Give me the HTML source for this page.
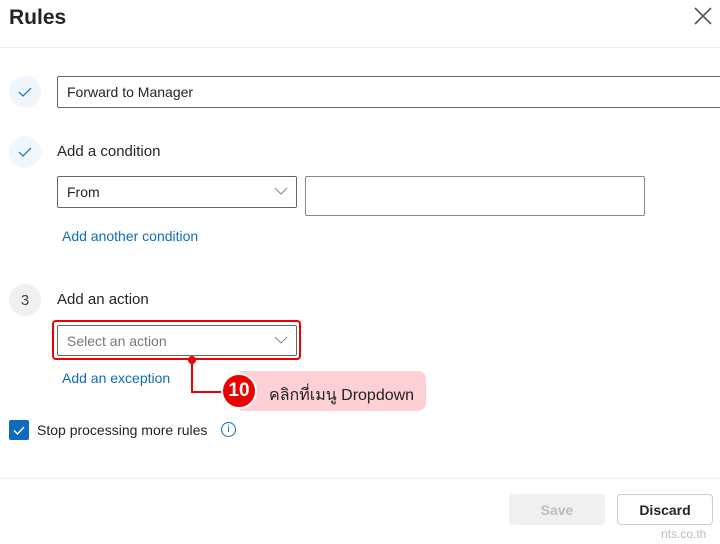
<!DOCTYPE html>
<html><head><style>
*{margin:0;padding:0;box-sizing:border-box}
body{width:720px;height:544px;background:#fff;font-family:"Liberation Sans","Noto Sans CJK SC",sans-serif;color:#242424;position:relative;overflow:hidden}
.a{position:absolute}
.circ{width:32px;height:32px;border-radius:50%;background:#eff6fc;display:flex;align-items:center;justify-content:center}
.box{border:1px solid #666;border-radius:2px;font-size:14px;padding-left:9px;display:flex;align-items:center}
.link{color:#0f6cbd;font-size:14px}
</style></head><body>
<div class="a" style="left:9px;top:6px;font-size:21px;font-weight:bold;color:#242424">Rules</div>
<svg class="a" style="left:694px;top:7px" width="18" height="18"><path d="M1 1L17 17M17 1L1 17" stroke="#555" stroke-width="1.6"/></svg>
<div class="a" style="left:0;top:47px;width:720px;height:1px;background:#eee"></div>

<div class="a circ" style="left:9px;top:76px"><svg width="14" height="10"><path d="M1 5L5 9L13 1" stroke="#0f6cbd" fill="none" stroke-width="1.2"/></svg></div>
<div class="a box" style="left:57px;top:76px;width:670px;height:32px">Forward to Manager</div>

<div class="a circ" style="left:9px;top:136px"><svg width="14" height="10"><path d="M1 5L5 9L13 1" stroke="#0f6cbd" fill="none" stroke-width="1.2"/></svg></div>
<div class="a" style="left:57px;top:143px;font-size:15px">Add a condition</div>
<div class="a box" style="left:57px;top:176px;width:240px;height:32px">From</div>
<svg class="a" style="left:274px;top:187px" width="14" height="8"><path d="M1 1L7 7L13 1" stroke="#888" fill="none"/></svg>
<div class="a" style="left:305px;top:176px;width:340px;height:40px;border:1px solid #888;border-radius:2px"></div>
<div class="a link" style="left:62px;top:228px">Add another condition</div>

<div class="a circ" style="left:9px;top:284px;background:#f0f0f0;font-size:15px;color:#444">3</div>
<div class="a" style="left:57px;top:291px;font-size:15px">Add an action</div>
<div class="a" style="left:52px;top:320px;width:249px;height:40px;border:2px solid #e00;border-radius:4px"></div>
<div class="a box" style="left:57px;top:325px;width:240px;height:31px;color:#777">Select an action</div>
<svg class="a" style="left:274px;top:336px" width="14" height="8"><path d="M1 1L7 7L13 1" stroke="#888" fill="none"/></svg>
<div class="a link" style="left:62px;top:370px">Add an exception</div>

<div class="a" style="left:191px;top:358px;width:2px;height:35px;background:#e00"></div>
<div class="a" style="left:191px;top:391px;width:40px;height:2px;background:#e00"></div>
<div class="a" style="left:188px;top:356px;width:8px;height:8px;border-radius:50%;background:#e00"></div>
<div class="a" style="left:240px;top:371px;width:186px;height:40px;background:#fdd0d6;border-radius:0 8px 8px 0"></div>
<div class="a" style="left:221px;top:373px;width:36px;height:36px;border-radius:50%;background:#e00;border:2px solid #fff;color:#fff;font-weight:bold;font-size:19px;display:flex;align-items:center;justify-content:center">10</div>
<div class="a" style="left:269px;top:383px;font-size:16px;color:#222">คลิกที่เมนู Dropdown</div>

<div class="a" style="left:9px;top:420px;width:20px;height:20px;background:#0f6cbd;border-radius:2px;display:flex;align-items:center;justify-content:center"><svg width="12" height="9"><path d="M1 4.5L4.5 8L11 1" stroke="#fff" fill="none" stroke-width="1.4"/></svg></div>
<div class="a" style="left:37px;top:422px;font-size:14px">Stop processing more rules</div>
<div class="a" style="left:221px;top:422px;width:15px;height:15px;border:1.3px solid #0f6cbd;border-radius:50%;color:#0f6cbd;font-size:10px;text-align:center;line-height:13px">i</div>

<div class="a" style="left:0;top:478px;width:720px;height:1px;background:#eee"></div>
<div class="a" style="left:509px;top:494px;width:96px;height:31px;background:#f0f0f0;border-radius:4px;color:#bdbdbd;font-size:14px;font-weight:bold;display:flex;align-items:center;justify-content:center">Save</div>
<div class="a" style="left:617px;top:494px;width:96px;height:31px;border:1px solid #ccc;border-radius:4px;font-size:14px;font-weight:bold;display:flex;align-items:center;justify-content:center">Discard</div>
<div class="a" style="left:661px;top:527px;font-size:12px;color:#bbb">nts.co.th</div>
</body></html>
